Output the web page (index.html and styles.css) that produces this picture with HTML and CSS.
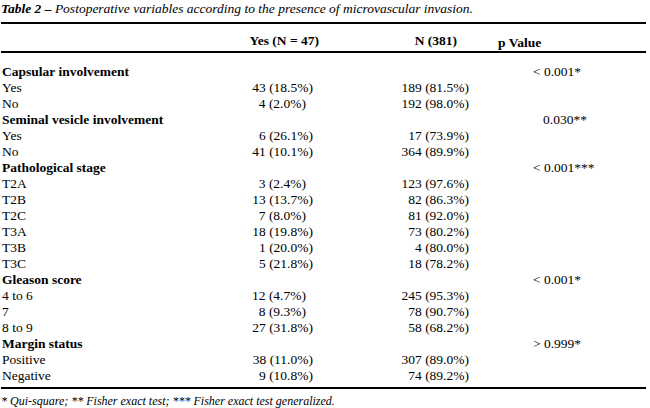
FILE: index.html
```html
<!DOCTYPE html>
<html lang="en">
<head>
<meta charset="utf-8">
<title>Table 2</title>
<link rel="stylesheet" href="styles.css">
</head>
<body>
<div class="page">
  <p class="caption"><b>Table 2 –</b> Postoperative variables according to the presence of microvascular invasion.</p>
  <div class="table">
    <div class="row head">
      <div class="c1"></div>
      <div class="c2">Yes (N = 47)</div>
      <div class="c3">N (381)</div>
      <div class="c4">p Value</div>
    </div>
    <div class="body">
      <div class="row group"><div class="c1">Capsular involvement</div><div class="c2"></div><div class="c3"></div><div class="c4">&lt; 0.001*</div></div>
      <div class="row"><div class="c1">Yes</div><div class="c2">43 (18.5%)</div><div class="c3">189 (81.5%)</div><div class="c4"></div></div>
      <div class="row"><div class="c1">No</div><div class="c2 short">4 (2.0%)</div><div class="c3">192 (98.0%)</div><div class="c4"></div></div>
      <div class="row group"><div class="c1">Seminal vesicle involvement</div><div class="c2"></div><div class="c3"></div><div class="c4 mid">0.030**</div></div>
      <div class="row"><div class="c1">Yes</div><div class="c2">6 (26.1%)</div><div class="c3">17 (73.9%)</div><div class="c4"></div></div>
      <div class="row"><div class="c1">No</div><div class="c2">41 (10.1%)</div><div class="c3">364 (89.9%)</div><div class="c4"></div></div>
      <div class="row group"><div class="c1">Pathological stage</div><div class="c2"></div><div class="c3"></div><div class="c4">&lt; 0.001***</div></div>
      <div class="row"><div class="c1">T2A</div><div class="c2 short">3 (2.4%)</div><div class="c3">123 (97.6%)</div><div class="c4"></div></div>
      <div class="row"><div class="c1">T2B</div><div class="c2">13 (13.7%)</div><div class="c3">82 (86.3%)</div><div class="c4"></div></div>
      <div class="row"><div class="c1">T2C</div><div class="c2 short">7 (8.0%)</div><div class="c3">81 (92.0%)</div><div class="c4"></div></div>
      <div class="row"><div class="c1">T3A</div><div class="c2">18 (19.8%)</div><div class="c3">73 (80.2%)</div><div class="c4"></div></div>
      <div class="row"><div class="c1">T3B</div><div class="c2">1 (20.0%)</div><div class="c3">4 (80.0%)</div><div class="c4"></div></div>
      <div class="row"><div class="c1">T3C</div><div class="c2">5 (21.8%)</div><div class="c3">18 (78.2%)</div><div class="c4"></div></div>
      <div class="row group"><div class="c1">Gleason score</div><div class="c2"></div><div class="c3"></div><div class="c4">&lt; 0.001*</div></div>
      <div class="row"><div class="c1">4 to 6</div><div class="c2 short">12 (4.7%)</div><div class="c3">245 (95.3%)</div><div class="c4"></div></div>
      <div class="row"><div class="c1">7</div><div class="c2 short">8 (9.3%)</div><div class="c3">78 (90.7%)</div><div class="c4"></div></div>
      <div class="row"><div class="c1">8 to 9</div><div class="c2">27 (31.8%)</div><div class="c3">58 (68.2%)</div><div class="c4"></div></div>
      <div class="row group"><div class="c1">Margin status</div><div class="c2"></div><div class="c3"></div><div class="c4">&gt; 0.999*</div></div>
      <div class="row"><div class="c1">Positive</div><div class="c2">38 (11.0%)</div><div class="c3">307 (89.0%)</div><div class="c4"></div></div>
      <div class="row"><div class="c1">Negative</div><div class="c2">9 (10.8%)</div><div class="c3">74 (89.2%)</div><div class="c4"></div></div>
    </div>
  </div>
  <p class="note">* Qui-square; ** Fisher exact test; *** Fisher exact test generalized.</p>
</div>
</body>
</html>
```
FILE: styles.css
```css
html, body {
  margin: 0;
  padding: 0;
  background: #ffffff;
}

.page {
  width: 645px;
  padding: 1px 0 0 1px;
  font-family: "Liberation Serif", "Times New Roman", serif;
  font-size: 13.5px;
  color: #000;
}

.caption {
  margin: 0;
  font-style: italic;
  line-height: 16px;
  height: 21px;
}

.caption b {
  font-weight: bold;
}

.table {
  border-top: 2px solid #000;
  border-bottom: 2px solid #000;
}

.row {
  display: grid;
  grid-template-columns: 200px 120px 155px 170px;
  line-height: 16px;
  height: 16px;
}

.row.head {
  height: 27px;
  align-items: end;
  font-weight: bold;
  border-bottom: 2px solid #000;
}

.head > div {
  padding-bottom: 2px;
}

.head .c2 {
  text-align: right;
  padding-right: 2px;
}

.head .c3 {
  text-align: right;
  padding-right: 19px;
}

.head .c4 {
  padding-left: 22px;
  padding-bottom: 0;
}

.body {
  padding: 11px 0 3px;
}

.group .c1 {
  font-weight: bold;
}

.c1 {
  padding-left: 1px;
  white-space: nowrap;
}

.c2 {
  text-align: right;
  padding-right: 8px;
}

.c2.short {
  padding-right: 15px;
}

.c3 {
  text-align: right;
  padding-right: 7px;
}

.c4 {
  padding-left: 57px;
  white-space: nowrap;
}

.c4.mid {
  padding-left: 67px;
}

.note {
  margin: 5px 0 0;
  font-style: italic;
  font-size: 12px;
  line-height: 14px;
}
```
